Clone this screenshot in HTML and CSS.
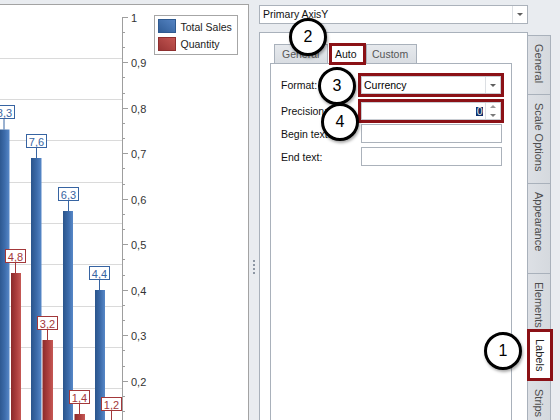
FILE: index.html
```html
<!DOCTYPE html>
<html>
<head>
<meta charset="utf-8">
<link rel="stylesheet" href="styles.css">
</head>
<body>
<div class="app">
  <div class="chart-panel">
    <svg class="chart" width="248" height="415" viewBox="0 5 248 415">
      <defs>
        <linearGradient id="gb" x1="0" y1="0" x2="1" y2="0">
          <stop offset="0" stop-color="#2a548b"/>
          <stop offset="0.55" stop-color="#3d6cab"/>
          <stop offset="1" stop-color="#5788c8"/>
        </linearGradient>
        <linearGradient id="gr" x1="0" y1="0" x2="1" y2="0">
          <stop offset="0" stop-color="#8a2a2a"/>
          <stop offset="0.55" stop-color="#ad3f3e"/>
          <stop offset="1" stop-color="#c65955"/>
        </linearGradient>
        <linearGradient id="gbl" x1="0" y1="1" x2="1" y2="0">
          <stop offset="0" stop-color="#2f5c96"/>
          <stop offset="1" stop-color="#5685c4"/>
        </linearGradient>
        <linearGradient id="grl" x1="0" y1="1" x2="1" y2="0">
          <stop offset="0" stop-color="#983434"/>
          <stop offset="1" stop-color="#c55753"/>
        </linearGradient>
      </defs>
      <g class="grid">
        <line x1="0" x2="122" y1="58.5" y2="58.5"/>
        <line x1="0" x2="122" y1="99.5" y2="99.5"/>
        <line x1="0" x2="122" y1="140.5" y2="140.5"/>
        <line x1="0" x2="122" y1="182.5" y2="182.5"/>
        <line x1="0" x2="122" y1="223.5" y2="223.5"/>
        <line x1="0" x2="122" y1="264.5" y2="264.5"/>
        <line x1="0" x2="122" y1="306.5" y2="306.5"/>
        <line x1="0" x2="122" y1="347.5" y2="347.5"/>
        <line x1="0" x2="122" y1="388.5" y2="388.5"/>
      </g>
      <g class="axis">
        <line x1="122.5" y1="17" x2="122.5" y2="420"/>
        <path d="M122 17.5h6M122 62.5h6M122 108.5h6M122 153.5h6M122 199.5h6M122 244.5h6M122 290.5h6M122 335.5h6M122 381.5h6"/>
        <path d="M122 32.5h3M122 47.5h3M122 77.5h3M122 93.5h3M122 123.5h3M122 138.5h3M122 168.5h3M122 184.5h3M122 214.5h3M122 229.5h3M122 259.5h3M122 275.5h3M122 305.5h3M122 320.5h3M122 350.5h3M122 366.5h3M122 396.5h3M122 411.5h3"/>
      </g>
      <g class="axis-labels">
        <text x="131" y="17.5">1</text>
        <text x="131" y="62.5">0,9</text>
        <text x="131" y="108.5">0,8</text>
        <text x="131" y="154">0,7</text>
        <text x="131" y="199.5">0,6</text>
        <text x="131" y="244.5">0,5</text>
        <text x="131" y="290.5">0,4</text>
        <text x="131" y="336">0,3</text>
        <text x="131" y="381.5">0,2</text>
      </g>
      <g class="bars">
        <rect class="bar-blue" x="-1" y="129.5" width="10.5" height="291"/>
        <rect class="bar-red" x="11" y="273" width="10" height="147"/>
        <rect class="bar-blue" x="31" y="158" width="10.5" height="262"/>
        <rect class="bar-red" x="42.5" y="340" width="10.5" height="80"/>
        <rect class="bar-blue" x="63" y="211" width="10" height="209"/>
        <rect class="bar-red" x="74.5" y="414" width="10.5" height="6"/>
        <rect class="bar-blue" x="95" y="290" width="10" height="130"/>
      </g>
      <g class="dl dl-blue">
        <path d="M4 118.5V129.5M36.5 147.5V158M68.5 200.5V211M99.5 279.5V290"/>
        <rect x="-5.5" y="105.5" width="20" height="13"/>
        <text x="4.5" y="112.5">8,3</text>
        <rect x="26.5" y="134.5" width="20" height="13"/>
        <text x="36.5" y="141.5">7,6</text>
        <rect x="58.5" y="187.5" width="20" height="13"/>
        <text x="68.5" y="194.5">6,3</text>
        <rect x="89.5" y="266.5" width="20" height="13"/>
        <text x="99.5" y="273.5">4,4</text>
      </g>
      <g class="dl dl-red">
        <path d="M15.5 262.5V273M47.5 329.5V340M79.5 403.5V414M111.5 410.5V420"/>
        <rect x="5.5" y="249.5" width="20" height="13"/>
        <text x="15.5" y="256.5">4,8</text>
        <rect x="37.5" y="316.5" width="20" height="13"/>
        <text x="47.5" y="323.5">3,2</text>
        <rect x="69.5" y="390.5" width="20" height="13"/>
        <text x="79.5" y="397.5">1,4</text>
        <rect x="101.5" y="397.5" width="20" height="13"/>
        <text x="111.5" y="404.5">1,2</text>
      </g>
      <g class="legend">
        <rect class="legend-box" x="154.5" y="15.5" width="83" height="39"/>
        <rect class="sw-blue" x="158.5" y="19.5" width="17" height="13"/>
        <rect class="sw-red" x="158.5" y="37.5" width="17" height="13"/>
        <text x="180.5" y="26.5">Total Sales</text>
        <text x="180.5" y="44">Quantity</text>
      </g>
    </svg>
  </div>

  <div class="splitter">
    <span class="dot"></span><span class="dot"></span><span class="dot"></span><span class="dot"></span>
  </div>

  <div class="props">
    <div class="combo axis-combo">
      <span class="combo-text">Primary AxisY</span>
      <span class="combo-btn"><i class="arrow-down"></i></span>
    </div>
    <div class="tabs-area">
      <div class="tab-container">
        <div class="tabstrip">
          <div class="tab tab-general">General</div>
          <div class="tab tab-auto">Auto</div>
          <div class="tab tab-custom">Custom</div>
        </div>
        <div class="tab-page">
          <div class="form">
            <div class="row row-format">
              <span class="lbl">Format:</span>
              <div class="field combo hl">
                <span class="combo-text">Currency</span>
                <span class="combo-btn"><i class="arrow-down"></i></span>
              </div>
            </div>
            <div class="row row-precision">
              <span class="lbl">Precision:</span>
              <div class="field spin hl">
                <span class="spin-text"><span class="sel">0</span></span>
                <span class="spin-btns"><i class="arrow-up"></i><i class="arrow-down light"></i></span>
              </div>
            </div>
            <div class="row row-begin">
              <span class="lbl">Begin text:</span>
              <div class="field text"></div>
            </div>
            <div class="row row-end">
              <span class="lbl">End text:</span>
              <div class="field text"></div>
            </div>
          </div>
        </div>
      </div>
      <div class="vtabs">
        <div class="vtab vt-general">General</div>
        <div class="vtab vt-scale">Scale Options</div>
        <div class="vtab vt-appearance">Appearance</div>
        <div class="vtab vt-elements">Elements</div>
        <div class="vtab vt-labels">Labels</div>
        <div class="vtab vt-strips">Strips</div>
      </div>
    </div>
  </div>

  <div class="marker m1">1</div>
  <div class="marker m2">2</div>
  <div class="marker m3">3</div>
  <div class="marker m4">4</div>
</div>
</body>
</html>
```

FILE: styles.css
```css
* { box-sizing: border-box; margin: 0; padding: 0; }
html, body { width: 560px; height: 420px; overflow: hidden; }
body {
  background: #e9ecf0;
  font-family: "Liberation Sans", Arial, sans-serif;
  font-size: 10.5px;
  color: #111;
}
.app {
  position: relative;
  display: flex;
  height: 420px;
  padding-top: 4px;
  overflow: hidden;
}

/* chart */
.chart-panel {
  width: 249px;
  flex: none;
  background: #fff;
  border-top: 1px solid #a3a3a3;
  border-right: 1px solid #a3a3a3;
  overflow: hidden;
}
.chart { display: block; }
.grid line { stroke: #dadada; stroke-width: 1; shape-rendering: crispEdges; }
.axis line, .axis path { stroke: #9e9e9e; stroke-width: 1; fill: none; shape-rendering: crispEdges; }
.axis-labels text {
  font-family: "Liberation Sans", Arial, sans-serif;
  font-size: 11px;
  fill: #333;
  dominant-baseline: central;
}
.bar-blue { fill: url(#gb); }
.bar-red { fill: url(#gr); }
.dl rect { fill: #fff; stroke-width: 1; }
.dl path { stroke-width: 1; fill: none; }
.dl text {
  font-family: "Liberation Sans", Arial, sans-serif;
  font-size: 11px;
  text-anchor: middle;
  dominant-baseline: central;
}
.dl-blue rect, .dl-blue path { stroke: #3764a2; }
.dl-blue text { fill: #3764a2; }
.dl-red rect, .dl-red path { stroke: #a3383a; }
.dl-red text { fill: #a3383a; }
.legend-box { fill: #fff; stroke: #a6a6a6; }
.sw-blue { fill: url(#gbl); stroke: #2f5a90; }
.sw-red { fill: url(#grl); stroke: #8e2f2f; }
.legend text {
  font-family: "Liberation Sans", Arial, sans-serif;
  font-size: 10.5px;
  fill: #222;
  dominant-baseline: central;
}

/* splitter */
.splitter {
  width: 10px;
  flex: none;
  display: flex;
  flex-direction: column;
  align-items: center;
  gap: 2px;
  padding-top: 256px;
}
.splitter .dot { width: 2px; height: 2px; background: #8d97a4; }

/* property panel */
.props {
  flex: 1;
  min-width: 0;
  min-height: 0;
  display: flex;
  flex-direction: column;
  padding-top: 1px;
}
.combo {
  display: flex;
  align-items: center;
  background: #fff;
  border: 1px solid #abb2bb;
}
.combo-text { flex: 1; padding-left: 2px; line-height: 1; white-space: nowrap; }
.combo-btn {
  width: 15px;
  align-self: stretch;
  border-left: 1px solid #dcdfe3;
  display: flex;
  align-items: center;
  justify-content: center;
}
.arrow-down {
  display: block;
  width: 0; height: 0;
  border-left: 3px solid transparent;
  border-right: 3px solid transparent;
  border-top: 3px solid #5f5f5f;
}
.arrow-up {
  display: block;
  width: 0; height: 0;
  border-left: 3px solid transparent;
  border-right: 3px solid transparent;
  border-bottom: 3px solid #9a9a9a;
}
.arrow-down.light { border-top-color: #7a7a7a; }
.axis-combo { width: 269px; height: 19px; flex: none; }
.axis-combo .combo-text { padding-left: 3px; }

.tabs-area {
  display: flex;
  align-items: stretch;
  margin-top: 8px;
  flex: 1;
  min-height: 0;
}
.tab-container {
  width: 269px;
  flex: none;
  background: #fff;
  border: 1px solid #a9b1bb;
  border-bottom: none;
  display: flex;
  flex-direction: column;
}
.tabstrip {
  height: 30px;
  flex: none;
  display: flex;
  align-items: flex-end;
  padding-left: 14px;
}
.tab {
  height: 19px;
  display: flex;
  align-items: center;
  border: 1px solid #a9b1bb;
  border-bottom: none;
  background: linear-gradient(#e6e9ed, #d9dde2);
  color: #565656;
  white-space: nowrap;
}
.tab-general { width: 54px; padding-left: 7px; }
.tab-auto {
  position: relative;
  z-index: 1;
  width: 37px;
  height: 22px;
  margin-left: 1px;
  margin-bottom: -2px;
  padding-left: 3px;
  padding-bottom: 1px;
  background: #fff;
  color: #111;
  border: 3px solid #8b1116;
}
.tab-custom { width: 51px; padding-left: 5px; }

.tab-page {
  margin-left: 10px;
  width: 242px;
  flex: 1;
  background: #fff;
  border: 1px solid #a9b1bb;
  border-bottom: none;
}
.form { padding: 12px 0 0 10px; display: flex; flex-direction: column; }
.row { display: flex; align-items: center; }
.lbl { width: 80px; flex: none; color: #111; white-space: nowrap; }
.field { width: 140px; height: 18px; background: #fff; border: 1px solid #abb2bb; }
.hl { outline: 3px solid #8b1116; }
.row-precision { margin-top: 8px; }
.row-begin { margin-top: 4px; }
.row-end { margin-top: 4px; }
.row-begin .field, .row-end .field { height: 19px; width: 141px; }
.row-format .combo-text { padding-left: 2px; color: #000; }
.field.combo { border-color: #c8ccd2; }
.spin { display: flex; align-items: center; border-color: #c8ccd2; }
.spin-text { flex: 1; display: flex; justify-content: flex-end; padding-right: 2px; }
.sel {
  background: #0f2f6c;
  color: #f4efe4;
  line-height: 9px;
  height: 9px;
  padding: 0 0.5px;
  font-size: 10.5px;
}
.spin-btns {
  width: 15px;
  align-self: stretch;
  border-left: 1px solid #dcdfe3;
  display: flex;
  flex-direction: column;
  align-items: center;
  justify-content: center;
  gap: 6px;
}

/* vertical tabs */
.vtabs {
  margin-top: 3px;
  margin-left: -1px;
  display: flex;
  flex-direction: column;
  width: 26px;
  flex: none;
  overflow: hidden;
}
.vtab {
  width: 24px;
  flex: none;
  margin-top: -1px;
  border: 1px solid #a9b1bb;
  background: linear-gradient(90deg, #dde0e5, #d5d9de);
  writing-mode: vertical-rl;
  padding-top: 8px;
  font-size: 11px;
  line-height: 22px;
  color: #4c4c4c;
  white-space: nowrap;
}
.vt-general { margin-top: 0; height: 60px; }
.vt-scale { height: 90px; }
.vt-appearance { height: 91px; }
.vt-elements { height: 57px; }
.vt-labels {
  position: relative;
  z-index: 1;
  width: 26px;
  height: 52px;
  border: 3px solid #8b1116;
  background: #fff;
  color: #222;
  line-height: 20px;
  padding-top: 7px;
}
.vt-strips { height: 60px; }

/* annotation markers */
.marker {
  position: absolute;
  width: 38px;
  height: 38px;
  border: 3px solid #000;
  border-radius: 50%;
  background: #fff;
  display: flex;
  align-items: center;
  justify-content: center;
  font-size: 16px;
  line-height: 1;
  color: #000;
  box-shadow: 1px 2px 3px rgba(0, 0, 0, 0.35);
  z-index: 5;
}
.m1 { left: 484px; top: 332px; }
.m2 { left: 289px; top: 18px; }
.m3 { left: 318px; top: 67px; }
.m4 { left: 321px; top: 103px; }
```
